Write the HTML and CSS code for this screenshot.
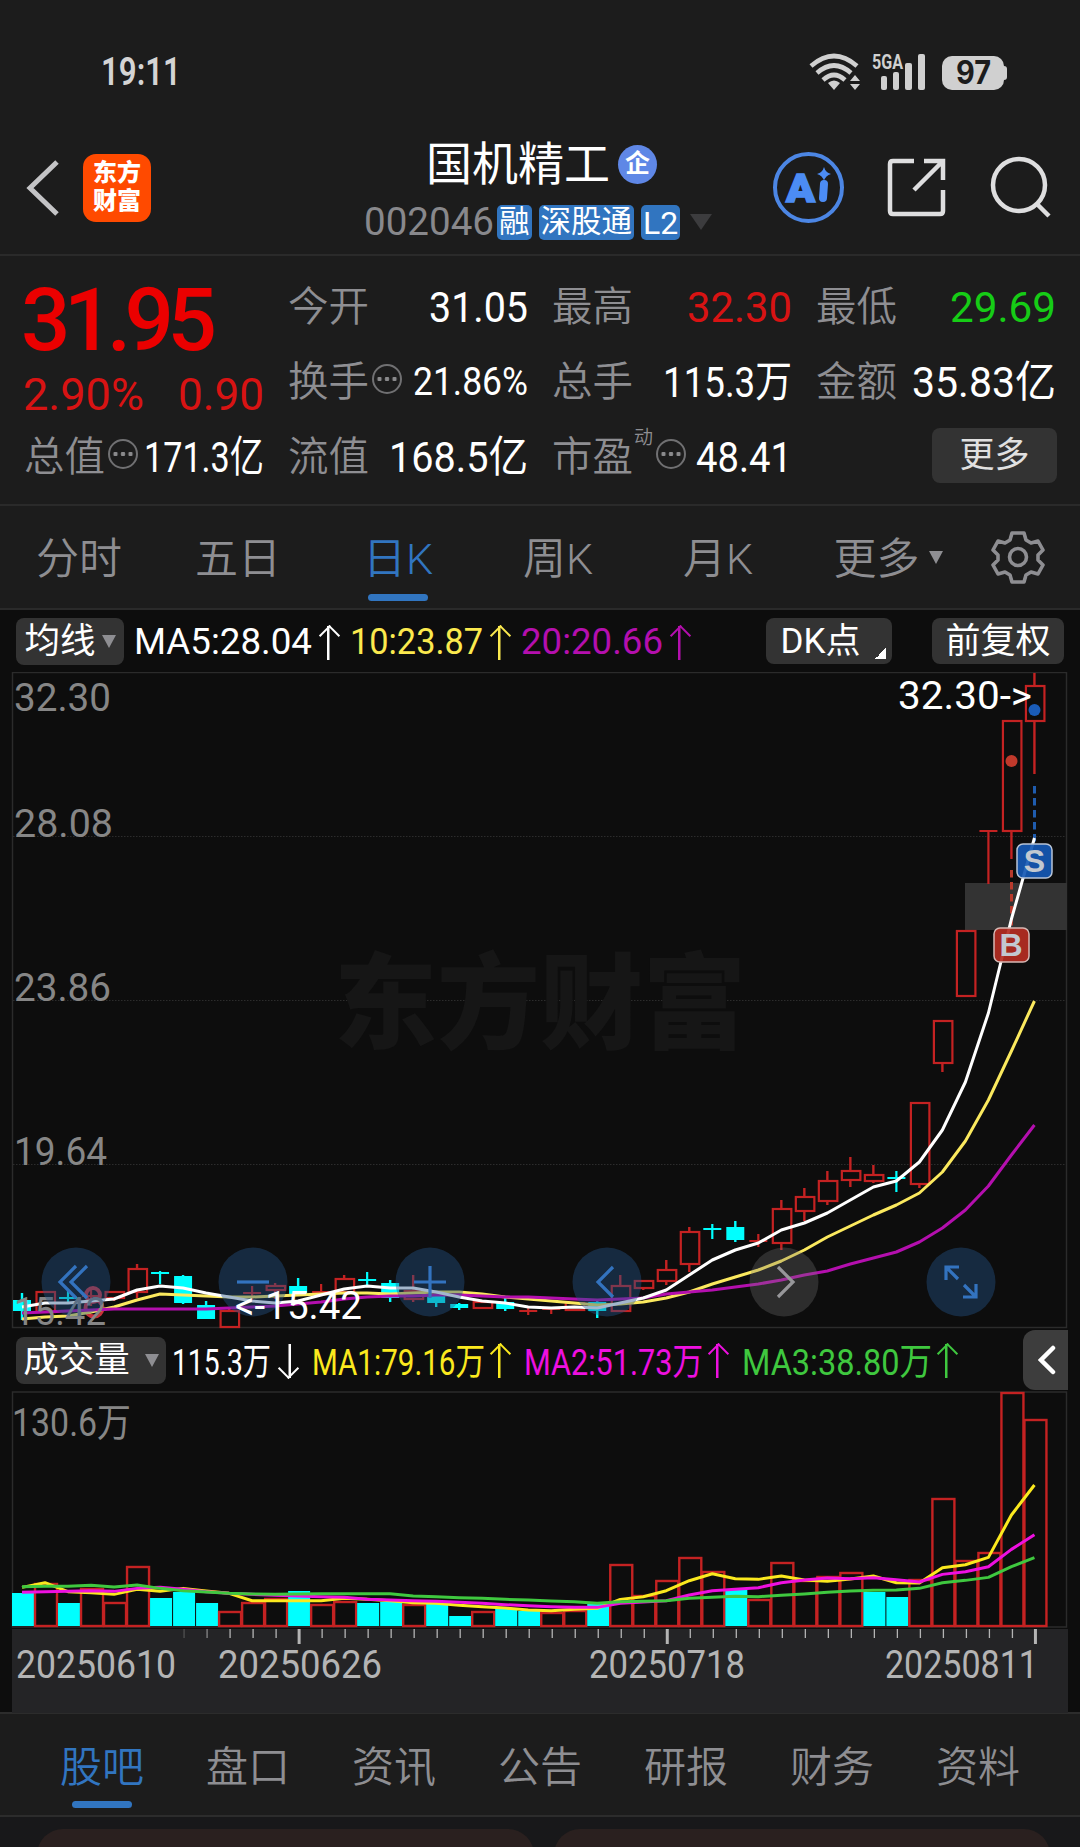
FILE: index.html
```html
<!DOCTYPE html>
<html lang="zh-CN">
<head>
    <meta charset="UTF-8">
    <meta name="viewport" content="width=device-width, initial-scale=1.0">
    <title>国机精工 002046</title>
    <link rel="stylesheet" href="styles.css">
</head>
<body>
<div class="status-bar">
    <span class="time" data-w="80">19:11</span>
    <svg class="status-icons" width="200" height="44" viewBox="808 50 200 44">
        <g fill="none" stroke="#d0d0d0" stroke-width="4.6">
            <path d="M811 66 Q834 46 857 66"/>
            <path d="M817 73 Q834 58 851 73"/>
            <path d="M823 80 Q834 70 845 80"/>
        </g>
        <g fill="#d0d0d0">
            <path d="M828 83 Q834 78 840 83 L834 90Z"/>
            <path d="M855 75 l5 6 h-10z M855 90 l5 -6 h-10z"/>
            <rect x="881" y="76" width="6" height="14" rx="2"/>
            <rect x="893" y="72" width="6" height="18" rx="2"/>
            <rect x="905" y="63" width="7" height="27" rx="2"/>
            <rect x="918" y="54" width="7" height="36" rx="2"/>
            <rect x="942" y="56" width="62" height="34" rx="10"/>
            <rect x="1000" y="66" width="7" height="14" rx="3"/>
        </g>
        <text x="872" y="69" class="net" textLength="31" lengthAdjust="spacingAndGlyphs">5GA</text>
        <text x="956" y="84" class="battery" textLength="35" lengthAdjust="spacingAndGlyphs">97</text>
    </svg>
</div>

<header class="header">
    <svg class="back" width="34" height="58" viewBox="0 0 34 58"><path d="M32 3 L5 29 L32 55" fill="none" stroke="#c4c4c6" stroke-width="5"/></svg>
    <div class="logo"><span>东方</span><span>财富</span></div>
    <div class="title">
        <div class="name"><span>国机精工</span><i class="badge">企</i></div>
        <div class="code">
            <span class="num" data-w="130">002046</span>
            <b class="tag">融</b><b class="tag">深股通</b><b class="tag l2">L2</b>
            <svg width="22" height="16" viewBox="0 0 22 16"><path d="M0 0H22L11 16Z" fill="#3c3c3e"/></svg>
        </div>
    </div>
    <svg class="actions" width="290" height="80" viewBox="768 148 290 80">
        <circle cx="808.5" cy="187.500" r="33.500" fill="none" stroke="#4c86e4" stroke-width="4"/>
        <text x="786" y="202" class="ai" textLength="29" lengthAdjust="spacingAndGlyphs">A</text>
        <path d="M824 184 L823 198" stroke="#4c8cf4" stroke-width="8" stroke-linecap="round"/>
        <path d="M824 167 Q825.500 172.500 831 174 Q825.500 175.500 824 181 Q822.500 175.500 817 174 Q822.500 172.500 824 167Z" fill="#4c8cf4"/>
        <g fill="none" stroke="#dededf" stroke-width="4.500">
            <path d="M914 161 H893 Q890 161 890 164 V211 Q890 214 893 214 H940 Q943 214 943 211 V190"/>
            <path d="M924 161 H943 V180 M943 161 L914 190"/>
            <circle cx="1019" cy="185" r="26"/>
            <path d="M1037 204 L1049 216"/>
        </g>
    </svg>
</header>

<section class="quote">
    <div class="price-box">
        <div class="price">31.95</div>
        <div class="change"><span data-w="121">2.90%</span><span data-w="86">0.90</span></div>
    </div>
    <div class="cell"><label>今开</label><span data-w="99">31.05</span></div>
    <div class="cell"><label>最高</label><span class="red" data-w="105">32.30</span></div>
    <div class="cell"><label>最低</label><span class="green" data-w="106">29.69</span></div>
    <div class="cell"><label>换手<i class="dots"></i></label><span class="small" data-w="115">21.86%</span></div>
    <div class="cell"><label>总手</label><span data-w="129">115.3万</span></div>
    <div class="cell"><label>金额</label><span data-w="144">35.83亿</span></div>
    <div class="cell"><label>总值<i class="dots"></i></label><span data-w="120">171.3亿</span></div>
    <div class="cell"><label>流值</label><span data-w="139">168.5亿</span></div>
    <div class="cell"><label>市盈<sup>动</sup><i class="dots"></i></label><span data-w="96">48.41</span></div>
    <div class="cell more"><button>更多</button></div>
</section>

<nav class="period">
    <a>分时</a><a>五日</a><a class="on">日K</a><a>周K</a><a>月K</a><a>更多<i class="tri"></i></a>
    <svg class="gear" width="56" height="56" viewBox="-28 -28 56 56">
        <g fill="none" stroke="#8e8e92" stroke-width="3.600" stroke-linejoin="round">
            <path d="M-6 -24 H6 L8 -17 L13 -14 L20 -16 L25 -7 L20 -2 V3 L25 8 L20 17 L13 15 L8 18 L6 25 H-6 L-8 18 L-13 15 L-20 17 L-25 8 L-20 3 V-2 L-25 -7 L-20 -16 L-13 -14 L-8 -17Z"/>
            <circle r="8.500"/>
        </g>
    </svg>
</nav>

<main class="charts">
    <div class="ma-row">
        <button class="pick">均线<i class="tri"></i></button>
        <span class="ma white"><span data-w="178">MA5:28.04</span><i class="up"></i></span>
        <span class="ma yellow"><span data-w="133">10:23.87</span><i class="up"></i></span>
        <span class="ma purple"><span data-w="142">20:20.66</span><i class="up"></i></span>
        <button class="dk">DK点</button>
        <button class="fq">前复权</button>
    </div>
    <div class="kline">
        <svg id="kline" width="1080" height="657" viewBox="0 672 1080 657"></svg>
        <div class="tools">
            <svg viewBox="-35 -35 70 70"><circle r="34.500"/><path d="M0 -16 L-16 0 L0 16 M11 -16 L-5 0 L11 16"/></svg>
            <svg viewBox="-35 -35 70 70"><circle r="34.500"/><path d="M-16 0 H16"/></svg>
            <svg viewBox="-35 -35 70 70"><circle r="34.500"/><path d="M-16 0 H16 M0 -16 V16"/></svg>
            <svg viewBox="-35 -35 70 70"><circle r="34.500"/><path d="M6 -15 L-9 0 L6 15"/></svg>
            <svg viewBox="-35 -35 70 70" class="off"><circle r="34.500"/><path d="M-6 -15 L9 0 L-6 15"/></svg>
            <svg viewBox="-35 -35 70 70"><circle r="34.500"/><path d="M-15 -2 V-15 H-2 M-15 -15 L-3 -3 M15 2 V15 H2 M15 15 L3 3"/></svg>
        </div>
        <span class="low" data-w="127">&lt;-15.42</span>
    </div>
    <div class="ma-row vol-row">
        <button class="pick">成交量<i class="tri"></i></button>
        <span class="ma white"><span data-w="99">115.3万</span><i class="up down"></i></span>
        <span class="ma yellow"><span data-w="173">MA1:79.16万</span><i class="up"></i></span>
        <span class="ma magenta"><span data-w="179">MA2:51.73万</span><i class="up"></i></span>
        <span class="ma lime"><span data-w="190">MA3:38.80万</span><i class="up"></i></span>
        <button class="fold"><svg width="18" height="30" viewBox="0 0 18 30"><path d="M15 3 L3 15 L15 27" fill="none" stroke="#fff" stroke-width="4.500" stroke-linecap="round"/></svg></button>
    </div>
    <svg id="volume" width="1080" height="322" viewBox="0 1391 1080 322"></svg>
</main>

<nav class="bottom">
    <a class="on">股吧</a><a>盘口</a><a>资讯</a><a>公告</a><a>研报</a><a>财务</a><a>资料</a>
</nav>
<div class="cards"><div></div><div></div></div>

<script src="chart.js"></script>
</body>
</html>
```
FILE: styles.css
```css
* {
    box-sizing: border-box;
}
body {
    margin: 0;
    width: 1080px;
    height: 1847px;
    overflow: hidden;
    background: #1c1c1c;
    color: #fff;
    font-family: Roboto, "Noto Sans CJK SC", sans-serif;
    font-weight: 400;
}
svg {
    display: block;
    flex: none;
}
i, b {
    font-style: normal;
    font-weight: 400;
}
button {
    border: 0;
    padding: 0;
    color: #fff;
    background: #333;
    border-radius: 8px;
    font: inherit;
}
span {
    white-space: nowrap;
}
[data-w] {
    display: inline-block;
    transform-origin: left center;
}

/* status bar */
.status-bar {
    height: 130px;
    padding: 50px 72px 0 101px;
    display: flex;
    justify-content: space-between;
}
.time {
    font-size: 38px;
    line-height: 44px;
    font-weight: 600;
    color: #d4d4d4;
}
.net {
    font: 700 20px Roboto, sans-serif;
    fill: #d0d0d0;
}
.battery {
    font: 700 32px Inter, sans-serif;
    fill: #1c1c1c;
}

/* header */
.header {
    height: 126px;
    display: flex;
    border-bottom: 2px solid #2a2a2a;
    padding-left: 25px;
}
.back {
    margin-top: 29px;
}
.logo {
    width: 68px;
    height: 68px;
    margin: 24px 0 0 24px;
    padding-top: 5px;
    border-radius: 13px;
    background: #ff4a00;
    font-size: 24px;
    line-height: 28px;
    font-weight: 900;
    text-align: center;
}
.logo span {
    display: block;
}
.title {
    width: 350px;
    margin-left: 213px;
}
.name {
    height: 68px;
    display: flex;
    align-items: center;
    padding-left: 62px;
    font-size: 46px;
    line-height: 68px;
}
.badge {
    width: 39px;
    height: 39px;
    margin-left: 8px;
    border-radius: 50%;
    background: #5f87e6;
    font-size: 25px;
    line-height: 37px;
    font-weight: 700;
    text-align: center;
}
.code {
    display: flex;
    align-items: center;
    height: 48px;
    font-size: 38px;
    color: #88888c;
}
.tag {
    flex: none;
    height: 35px;
    margin-left: 7px;
    padding: 0 2px;
    border-radius: 5px;
    background: #3175c0;
    color: #fff;
    font-size: 30.5px;
    line-height: 33px;
    white-space: nowrap;
}
.code .num + .tag {
    margin-left: 3px;
}
.tag.l2 {
    padding: 0 2px;
    margin-right: 10px;
    font-size: 32px;
    line-height: 36px;
}
.actions {
    margin: 18px 0 0 54px;
}
.ai {
    font: 900 38px Roboto, sans-serif;
    fill: #4c8cf4;
    stroke: #4c8cf4;
    stroke-width: 1.5px;
}

/* quote */
.quote {
    height: 250px;
    padding: 14px 24px 0 25px;
    display: grid;
    grid-template-columns: repeat(4, 239px);
    grid-template-rows: repeat(3, 75px);
    column-gap: 25px;
    border-bottom: 2px solid #2a2a2a;
}
.price-box {
    grid-row: 1 / 3;
    color: #eb0000;
}
.price {
    height: 100px;
    margin-left: -4px;
    font-size: 87px;
    line-height: 100px;
    font-weight: 500;
    letter-spacing: -6.5px;
}
.change {
    display: flex;
    justify-content: space-between;
    font-size: 45px;
    line-height: 50px;
    margin-left: -2px;
    color: #d81313;
}
.cell {
    display: flex;
    align-items: center;
    justify-content: space-between;
    font-size: 43px;
    line-height: 75px;
}
.cell label {
    position: relative;
    display: flex;
    align-items: center;
    margin-left: -1px;
    font-size: 40.5px;
    font-weight: 350;
    color: #8e8e92;
}
.cell .small {
    font-size: 39px;
}
.cell sup {
    font-size: 19px;
    line-height: 20px;
    align-self: flex-start;
    margin: 8px 0 0 1px;
}
.red {
    color: #d81313;
}
.green {
    color: #16cc16;
}
.dots {
    width: 30px;
    height: 30px;
    margin: -8px 0 0 3px;
    border: 2.5px solid #707072;
    border-radius: 50%;
    background: radial-gradient(circle, #8a8a8c 2px, transparent 2.5px) center / 7.5px 8px repeat-x;
    background-clip: content-box;
    padding: 0 1px;
}
.more {
    justify-content: flex-end;
}
.more button {
    width: 125px;
    height: 55px;
    margin: -4px -1px 0 0;
    font-size: 35px;
    line-height: 50px;
    color: #e0e0e0;
}

/* period tabs */
.period {
    height: 104px;
    display: flex;
    align-items: center;
    border-bottom: 2px solid #2a2a2a;
    font-size: 43px;
    font-weight: 350;
    color: #8e8e92;
}
.period a {
    position: relative;
    width: 160px;
    height: 102px;
    line-height: 106px;
    text-align: center;
    white-space: nowrap;
}
.period a:first-child {
    width: 158px;
}
.period a:nth-child(6) {
    width: 172px;
    margin-left: 4px;
}
.on {
    color: #3175c0;
}
.on::after {
    content: "";
    position: absolute;
    left: 50%;
    bottom: 7px;
    width: 60px;
    height: 7px;
    margin-left: -30px;
    border-radius: 4px;
    background: #3175c0;
}
.tri {
    display: inline-block;
    border: 7px solid transparent;
    border-top: 13px solid #8e8e92;
    border-bottom: 0;
}
.period .tri {
    margin: 0 0 10px 9px;
}
.gear {
    margin-left: 16px;
}

/* charts */
.charts {
    height: 1103px;
    background: #0d0d0d;
}
.ma-row {
    height: 62px;
    display: flex;
    align-items: center;
    padding: 0 16px;
    font-size: 37px;
}
.pick {
    width: 108px;
    height: 47px;
    display: flex;
    align-items: center;
    justify-content: center;
    gap: 6px;
    font-size: 35.5px;
    line-height: 45px;
}
.ma {
    display: flex;
    align-items: center;
    margin-left: 10px;
}
.ma + .ma {
    margin-left: 13px;
}
.up {
    width: 17px;
    height: 34px;
    margin: 4px 0 0 8px;
    background: linear-gradient(currentColor, currentColor) center / 2.5px 100% no-repeat;
    position: relative;
}
.up::after {
    content: "";
    position: absolute;
    left: 2px;
    top: 2px;
    width: 13px;
    height: 13px;
    border: solid currentColor;
    border-width: 2.5px 0 0 2.5px;
    transform: rotate(45deg);
}
.down {
    transform: rotate(180deg);
}
.white { color: #fff; }
.yellow { color: #fbe94e; }
.purple { color: #b40fae; }
.magenta { color: #ee10e0; }
.lime { color: #3fc83f; }
.dk, .fq {
    height: 46px;
    font-size: 35px;
    line-height: 45px;
}
.dk {
    width: 126px;
    margin-left: auto;
    padding-right: 17px;
    background: linear-gradient(135deg, transparent 50%, #fff 50%) 109px 30px / 11px 11px no-repeat #333;
}
.fq {
    width: 132px;
    margin-left: 40px;
}
.kline {
    position: relative;
}
.tools {
    position: absolute;
    left: 41px;
    top: 575px;
    display: flex;
    gap: 107px;
}
.tools svg {
    width: 70px;
    height: 70px;
    fill: none;
}
.tools circle {
    fill: rgba(36, 83, 137, 0.42);
}
.tools path {
    stroke: #3373bf;
    stroke-width: 3.2;
}
.tools .off circle {
    fill: rgba(120, 120, 120, 0.3);
}
.tools .off path {
    stroke: #97979a;
}
.low {
    position: absolute;
    left: 235px;
    top: 612px;
    font-size: 38.5px;
    line-height: 44px;
}
.vol-row {
    padding-right: 12px;
}
.vol-row .pick {
    width: 150px;
    gap: 15px;
}
.vol-row .ma {
    margin-left: 6px;
    padding-bottom: 2px;
}
.vol-row .ma + .ma {
    margin-left: 16px;
}
.vol-row .yellow {
    color: #fbe91e;
}
.vol-row .up {
    margin: 4px 0 0 6px;
}
.vol-row .down {
    margin-left: 10px;
}
.vol-row .white + .ma {
    margin-left: 14px;
}
.fold {
    width: 45px;
    height: 60px;
    margin-left: auto;
    padding-left: 15px;
    border-radius: 12px 0 0 12px;
    background: #3d3d3d;
}
.axis {
    font: 400 38.5px Roboto, "Noto Sans CJK SC", sans-serif;
    fill: #868686;
}
.mark {
    font: 400 38.5px Roboto, sans-serif;
    fill: #fff;
}
.date {
    font: 400 38px Roboto, sans-serif;
    fill: #b4b4b4;
}
.water {
    font: 900 104px "Noto Sans CJK SC", sans-serif;
    fill: #161616;
}
.bs {
    font: 700 32px "Liberation Sans", sans-serif;
    fill: #c2c8d0;
    text-anchor: middle;
}

/* bottom tabs */
.bottom {
    height: 105px;
    margin-top: -1px;
    display: flex;
    padding-left: 29px;
    border-top: 2px solid #2c2c2c;
    border-bottom: 2px solid #2c2c2c;
    background: #1c1c1c;
    font-size: 42px;
    line-height: 107px;
    font-weight: 350;
    color: #8e8e92;
}
.bottom a {
    position: relative;
    width: 146px;
    text-align: center;
}
.bottom .on {
    color: #3175c0;
}
.cards {
    height: 32px;
    padding: 12px 30px 0 37px;
    display: flex;
    gap: 20px;
    background: #18181a;
}
.cards div {
    flex: 1;
    height: 60px;
    border-radius: 26px;
    background: #2a201f;
}
```
FILE: chart.js
```javascript
const STEP = 23.01;
const X0 = 22.5;
const RED = '#c42222';
const CYAN = '#00ffff';
const px = i => X0 + STEP * i;

// candles: [colour, body top, body bottom, wick top, wick bottom]
const candles = [
    ['c', 1300, 1311, 1293, 1320], ['r', 1292, 1312, 1292, 1312], ['c', 1298, 1298, 1291, 1304],
    ['r', 1296, 1298, 1290, 1306], ['r', 1292, 1298, 1292, 1301], ['r', 1269, 1292, 1264, 1298],
    ['c', 1273, 1275, 1271, 1284], ['c', 1276, 1303, 1275, 1304], ['c', 1305, 1319, 1301, 1319],
    ['r', 1311, 1327, 1308, 1328], ['r', 1293, 1293, 1286, 1300], ['r', 1286, 1290, 1283, 1299],
    ['c', 1286, 1294, 1278, 1296], ['r', 1292, 1292, 1284, 1295], ['r', 1279, 1292, 1275, 1292],
    ['c', 1280, 1280, 1272, 1286], ['c', 1283, 1298, 1280, 1302], ['r', 1291, 1299, 1275, 1302],
    ['c', 1296, 1303, 1296, 1307], ['c', 1304, 1308, 1303, 1310], ['r', 1302, 1308, 1302, 1309],
    ['c', 1302, 1309, 1297, 1311], ['r', 1311, 1311, 1307, 1315], ['r', 1309, 1311, 1309, 1314],
    ['r', 1303, 1310, 1303, 1310], ['c', 1302, 1311, 1301, 1318], ['r', 1286, 1311, 1275, 1312],
    ['r', 1281, 1288, 1281, 1290], ['r', 1270, 1281, 1260, 1285], ['r', 1232, 1264, 1227, 1272],
    ['c', 1229, 1229, 1224, 1239], ['c', 1227, 1240, 1221, 1242], ['r', 1241, 1241, 1234, 1247],
    ['r', 1209, 1243, 1200, 1250], ['r', 1197, 1211, 1188, 1221], ['r', 1181, 1201, 1171, 1205],
    ['r', 1171, 1180, 1157, 1187], ['r', 1175, 1181, 1165, 1183], ['c', 1178, 1178, 1171, 1192],
    ['r', 1103, 1184, 1103, 1188], ['r', 1021, 1063, 1021, 1072], ['r', 931, 996, 931, 996],
    ['r', 831, 831, 831, 884], ['r', 721, 831, 721, 859], ['r', 686, 721, 673, 774]
];

const ma5 = [1307, 1303, 1303, 1301, 1299, 1290, 1286, 1288, 1293, 1297, 1301, 1303, 1301, 1295, 1289, 1286, 1288, 1288, 1292, 1297, 1301, 1303, 1307, 1308, 1307, 1308, 1303, 1298, 1290, 1275, 1260, 1250, 1243, 1230, 1223, 1213, 1200, 1187, 1181, 1162, 1130, 1082, 1013, 919, 838];
const ma10 = [1319, 1317, 1316, 1312, 1307, 1300, 1294, 1295, 1296, 1297, 1297, 1296, 1295, 1294, 1293, 1293, 1294, 1293, 1292, 1292, 1294, 1297, 1299, 1301, 1303, 1305, 1304, 1302, 1298, 1292, 1284, 1277, 1270, 1261, 1250, 1237, 1226, 1215, 1205, 1193, 1172, 1141, 1100, 1051, 1001];
const ma20 = [1313, 1312, 1311, 1310, 1309, 1309, 1309, 1309, 1309, 1308, 1307, 1306, 1304, 1302, 1299, 1297, 1296, 1296, 1295, 1295, 1296, 1297, 1297, 1298, 1299, 1300, 1299, 1298, 1294, 1292, 1290, 1287, 1284, 1280, 1275, 1271, 1264, 1258, 1252, 1242, 1228, 1210, 1186, 1155, 1125];

const bars = 'c1593 r1583 c1603 r1588 r1602 r1566 c1598 c1592 c1603 r1611 r1602 r1598 c1591 r1604 r1601 c1603 c1602 r1604 c1603 c1616 r1611 c1609 c1611 r1612 r1610 c1604 r1564 r1595 r1580 r1557 r1571 c1590 r1599 r1562 r1580 r1576 r1572 c1592 c1597 r1579 r1498 r1560 r1552 r1392 r1419'.split(' ');
const vma1 = [242, 228, 255, 258, 263, 248, 254, 245, 253, 260, 282, 282, 282, 282, 275, 278, 282, 288, 290, 296, 300, 304, 310, 312, 308, 305, 278, 270, 252, 222, 201, 216, 218, 208, 220, 224, 217, 208, 228, 229, 183, 174, 152, 25, -65].map(v => 1506.7 + v / 3);
const vma2 = [257, 255, 254, 252, 254, 245, 242, 248, 255, 260, 263, 266, 268, 270, 272, 278, 280, 282, 284, 287, 290, 294, 297, 300, 302, 302, 290, 286, 282, 265, 252, 248, 243, 228, 220, 214, 216, 213, 219, 226, 203, 195, 180, 128, 84].map(v => 1506.7 + v / 3);
const vma3 = [240, 239, 239, 236, 241, 235, 245, 252, 256, 260, 262, 263, 262, 261, 261, 261, 261, 268, 270, 273, 275, 278, 280, 283, 285, 290, 285, 284, 282, 275, 272, 269, 270, 266, 262, 257, 253, 251, 250, 245, 228, 221, 212, 180, 153].map(v => 1506.7 + v / 3);

function line(values, color) {
    const pts = values.map((y, i) => `${px(i) - 0.5},${y}`).join(' ');
    return `<polyline points="${pts}" fill="none" stroke="${color}" stroke-width="3" stroke-linejoin="round"/>`;
}

function label(x, y, w, cls, text) {
    return `<text x="${x}" y="${y}" class="${cls}" textLength="${w}" lengthAdjust="spacingAndGlyphs">${text}</text>`;
}

function candle([kind, top, bottom, high, low], i) {
    const x = px(i) - 0.5;
    const color = kind === 'r' ? RED : CYAN;
    const flat = bottom - top < 2.5;
    let out = '';
    if (flat) {
        out += `<path d="M${x - 9} ${top}H${x + 9}M${x} ${high}V${low}" stroke="${color}" stroke-width="2.2"/>`;
    } else {
        out += `<path d="M${x} ${high}V${top}M${x} ${bottom}V${low}" stroke="${color}" stroke-width="2.4"/>`;
        out += kind === 'r'
            ? `<rect x="${x - 8.5}" y="${top}" width="18.500" height="${bottom - top}" fill="none" stroke="${color}" stroke-width="2.2"/>`
            : `<rect x="${x - 9}" y="${top}" width="18" height="${bottom - top}" fill="${color}"/>`;
    }
    return out;
}

function drawKline() {
    let s = '<rect x="12.500" y="672.500" width="1054" height="655" fill="none" stroke="#2b2b2b" stroke-width="1.500"/>';
    [836.5, 1000.5, 1164.5].forEach(y => {
        s += `<path d="M13 ${y}H1067" stroke="#2c2c2c" stroke-dasharray="1.500 1.500"/>`;
    });
    s += label(334, 1041, 412, 'water', '东方财富');
    s += '<rect x="965" y="883" width="102" height="47" fill="#333"/>';
    s += candles.map(candle).join('');
    s += '<path d="M1034.500 786V842" stroke="#1f5cae" stroke-width="3" stroke-dasharray="7.500 4.500"/>';
    s += '<path d="M1011.500 870V928" stroke="#b83a2c" stroke-width="3" stroke-dasharray="7.500 4.500"/>';
    s += '<circle cx="1034.500" cy="710" r="6" fill="#1a5cb8"/><circle cx="1011.500" cy="761" r="6" fill="#c0392b"/>';
    s += '<g fill="none" stroke="#c8303a" stroke-width="4"><circle cx="93" cy="1295" r="7"/><circle cx="94" cy="1308" r="8.500"/></g>';
    s += line(ma10, '#fbe95e') + line(ma20, '#b40fae') + line(ma5, '#fff');
    s += '<rect x="1017" y="844" width="35" height="34" rx="6" fill="#1558b4" fill-opacity=".92" stroke="#b8c4d6" stroke-width="1.500"/>';
    s += '<rect x="994" y="928" width="35" height="34" rx="6" fill="#b42c22" fill-opacity=".92" stroke="#d6b8b4" stroke-width="1.500"/>';
    s += '<text x="1034.500" y="872" class="bs">S</text><text x="1011" y="956" class="bs">B</text>';
    s += label(14, 711, 97, 'axis', '32.30') + label(14, 837, 99, 'axis', '28.08');
    s += label(14, 1001, 97, 'axis', '23.86') + label(14, 1165, 93, 'axis', '19.64');
    s += label(14, 1325, 92, 'axis', '15.42');
    s += label(898, 709, 134, 'mark', '32.30-&gt;');
    document.getElementById('kline').innerHTML = s;
}

function drawVolume() {
    let s = '<rect x="12.500" y="1392" width="1054" height="235" fill="none" stroke="#2b2b2b" stroke-width="1.500"/>';
    s += label(12, 1436, 119, 'axis', '130.6万');
    bars.forEach((b, i) => {
        const y = Number(b.slice(1));
        const x = px(i) - 11;
        s += b[0] === 'r'
            ? `<rect x="${x + 0.5}" y="${y + 1}" width="22" height="${1625 - y}" fill="none" stroke="${RED}" stroke-width="2.400"/>`
            : `<rect x="${x + 0.5}" y="${y}" width="22" height="${1626 - y}" fill="${CYAN}"/>`;
    });
    s += line(vma1, '#fbe91e') + line(vma2, '#ee10e0') + line(vma3, '#3fc83f');
    s += '<rect x="12" y="1629" width="1056" height="84" fill="#242426"/>';
    for (let i = 7; i < 45; i++) {
        const big = i === 12 || i === 28 || i === 44;
        s += `<path d="M${px(i) + 0.5} 1629V${big ? 1644 : 1638}" stroke="#b4b4b4" stroke-width="${big ? 3 : 1.3}" opacity="${i === 7 ? 0.3 : i === 8 ? 0.7 : 1}"/>`;
    }
    s += label(16, 1678, 160, 'date', '20250610') + label(218, 1678, 164, 'date', '20250626');
    s += label(589, 1678, 156, 'date', '20250718') + label(885, 1678, 153, 'date', '20250811');
    document.getElementById('volume').innerHTML = s;
}

// condense numbers so that each one takes the width given in data-w
function fitNumbers() {
    document.querySelectorAll('[data-w]').forEach(el => {
        const range = document.createRange();
        range.selectNodeContents(el);
        const natural = range.getBoundingClientRect().width;
        el.style.transform = `scaleX(${el.dataset.w / natural})`;
        el.style.width = natural + 'px';
        el.style.flex = 'none';
        el.style.marginRight = el.dataset.w - natural + 'px';
    });
}

drawKline();
drawVolume();
fitNumbers();
```
